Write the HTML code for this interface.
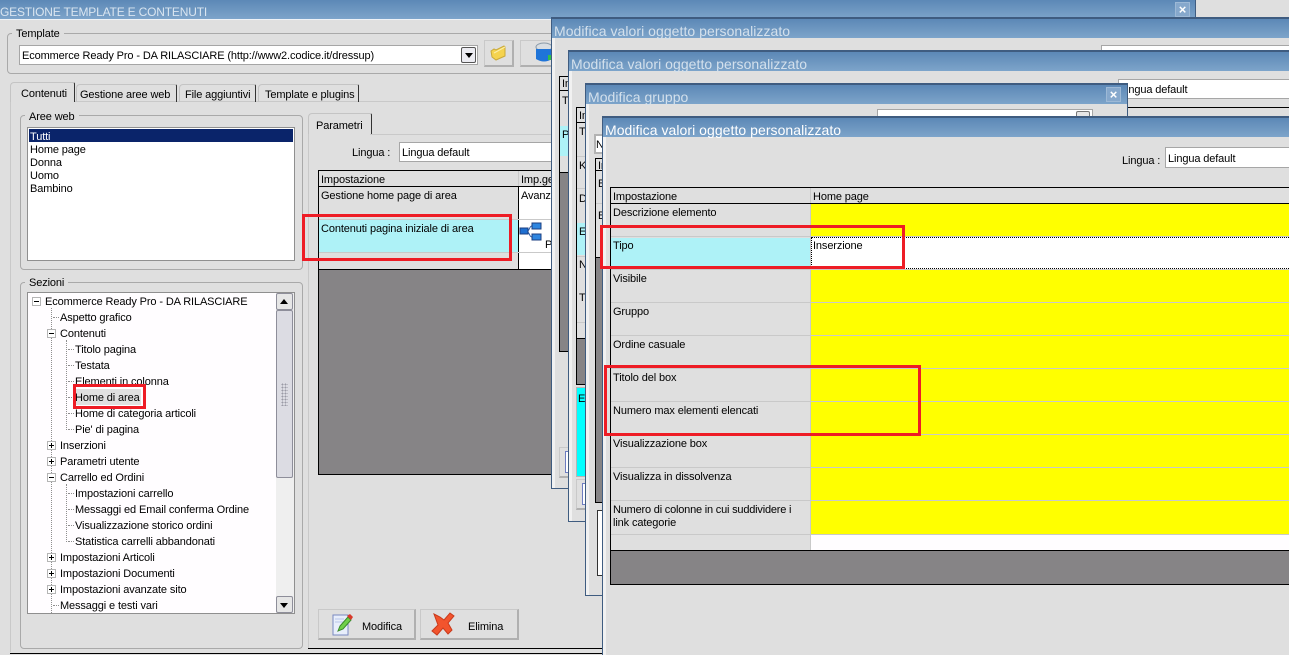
<!DOCTYPE html>
<html><head><meta charset="utf-8"><title>Gestione template e contenuti</title>
<style>
html,body{margin:0;padding:0;width:1289px;height:655px;overflow:hidden}
body{position:relative;background:#dfdfdf;font:11px/14px "Liberation Sans",sans-serif;color:#000}
div,svg{position:absolute;box-sizing:border-box}
.t{white-space:nowrap;height:14px;margin-top:1px;letter-spacing:-.12px}
.tb{background:linear-gradient(#5c88b6,#7da4ca)}
.win{border:1px solid #3f5c80;background:#dfdfdf;border-top:2px solid #3f5c80}
.edge{background:#f1f1f1}
.wt{white-space:nowrap;color:#d3e0ec;font-size:14px;line-height:16px;height:16px;letter-spacing:.05px;margin-top:1px}
.fs{border:1px solid #a9a9a9;border-radius:4px}
.lg{background:#dfdfdf;padding:0 4px;white-space:nowrap;height:14px;margin-top:1px;letter-spacing:-.12px}
.in{background:#fff;border:1px solid #a6a6a6}
.box{background:#fff;border:1px solid #8f8f8f}
.red{border:3px solid #ee1c25}
.k{background:#000}
.g{background:#868486}
.s{background:#c9c9c9}
.btn{background:#dfdfdf;border:1px solid #c9c9c9;border-right:2px solid #b0b0b0;border-bottom:2px solid #b0b0b0}
.xb{width:15px;height:15px;background:#86a8cc;border:1px solid #9db9d6;color:#fff;font:bold 13px/13px "Liberation Sans",sans-serif;text-align:center}
.v{border-left:1px dotted #8f8f8f;width:1px}
.h{border-top:1px dotted #8f8f8f;height:1px}
.ex{width:9px;height:9px;border:1px solid #b5b5b5;background:#fff}
.ex:before{content:"";position:absolute;left:1px;top:3px;width:5px;height:1px;background:#000}
.p:after{content:"";position:absolute;left:3px;top:1px;width:1px;height:5px;background:#000}
.sb{background:#e6e6e6;border:1px solid #8e8e9a;border-radius:2px}
.ar{width:0;height:0;border-left:4px solid transparent;border-right:4px solid transparent}
.up{border-bottom:5px solid #000}
.dn{border-top:5px solid #000}
.tab{border-right:1px solid #333;border-top:1px solid #c4c4c4;border-left:1px solid #c4c4c4;border-radius:4px 2px 0 0}
</style></head><body>

<!-- main window -->
<div class="tb" style="left:0;top:0;width:1196px;height:19px;border-right:1px solid #3f5c80"></div>
<div class="s" style="left:0;top:19px;width:1196px;height:1px;background:#eef2f6"></div>
<div class="t" style="left:0;top:4px;color:#d9e5f0;font-size:12px;letter-spacing:-.18px;">GESTIONE TEMPLATE E CONTENUTI</div>
<div class="xb" style="left:1175px;top:2px">×</div>

<div class="fs" style="left:7px;top:33px;width:700px;height:41px"></div>
<div class="lg" style="left:12px;top:26px">Template</div>
<div class="in" style="left:19px;top:45px;width:459px;height:20px"></div>
<div class="t" style="left:22px;top:48px">Ecommerce Ready Pro - DA RILASCIARE (http://www2.codice.it/dressup)</div>
<div class="sb" style="left:461px;top:47px;width:15px;height:16px;border-color:#555;background:#ececf2"></div>
<div class="ar dn" style="left:465px;top:53px"></div>
<div class="btn" style="left:484px;top:40px;width:30px;height:27px"></div>
<svg style="left:490px;top:44px" width="18" height="18" viewBox="0 0 18 18"><path d="M1 7l3-2 2 1 8-4 1 1v9l-9 4-4-3z" fill="#f5d34e" stroke="#c9a93a"/><path d="M4 9l11-6" stroke="#fbeeaa"/></svg>
<div class="btn" style="left:520px;top:40px;width:40px;height:27px"></div>
<svg style="left:534px;top:41px" width="20" height="24" viewBox="0 0 20 24"><ellipse cx="10" cy="6" rx="8" ry="4" fill="#d8dde2" stroke="#8a9aa8"/><path d="M2 8h16v10q-8 5-16 0z" fill="#1f74d8"/><rect x="14" y="14" width="5" height="5" fill="#2fc04a"/></svg>

<!-- tabs -->
<div class="s" style="left:74px;top:101px;width:480px;height:1px"></div>
<div class="tab" style="left:10px;top:82px;width:65px;height:20px"></div>
<div class="t" style="left:21px;top:86px">Contenuti</div>
<div class="tab" style="left:76px;top:84px;width:101px;height:18px"></div>
<div class="t" style="left:80px;top:87px">Gestione aree web</div>
<div class="tab" style="left:179px;top:84px;width:77px;height:18px"></div>
<div class="t" style="left:185px;top:87px">File aggiuntivi</div>
<div class="tab" style="left:258px;top:84px;width:101px;height:18px"></div>
<div class="t" style="left:265px;top:87px">Template e plugins</div>
<div class="s" style="left:10px;top:102px;width:1px;height:550px"></div>
<div class="k" style="left:10px;top:653px;width:595px;height:1px"></div>

<!-- aree web -->
<div class="fs" style="left:20px;top:115px;width:283px;height:155px"></div>
<div class="lg" style="left:25px;top:109px">Aree web</div>
<div class="box" style="left:27px;top:127px;width:268px;height:134px"></div>
<div style="left:29px;top:129px;width:264px;height:13px;background:#0a246a"></div>
<div class="t" style="left:30px;top:129px;color:#fff">Tutti</div>
<div class="t" style="left:30px;top:142px">Home page</div>
<div class="t" style="left:30px;top:155px">Donna</div>
<div class="t" style="left:30px;top:168px">Uomo</div>
<div class="t" style="left:30px;top:181px">Bambino</div>

<!-- sezioni -->
<div class="fs" style="left:20px;top:282px;width:283px;height:367px"></div>
<div class="lg" style="left:25px;top:275px">Sezioni</div>
<div class="box" style="left:27px;top:292px;width:268px;height:322px;background:#fffdff"></div>
<div class="v" style="left:51px;top:308px;height:305px"></div>
<div class="v" style="left:66px;top:340px;height:90px"></div>
<div class="v" style="left:66px;top:484px;height:58px"></div>
<div class="h" style="left:53px;top:317px;width:6px"></div>
<div class="h" style="left:68px;top:349px;width:6px"></div>
<div class="h" style="left:68px;top:365px;width:6px"></div>
<div class="h" style="left:68px;top:381px;width:6px"></div>
<div class="h" style="left:68px;top:397px;width:6px"></div>
<div class="h" style="left:68px;top:413px;width:6px"></div>
<div class="h" style="left:68px;top:429px;width:6px"></div>
<div class="h" style="left:68px;top:493px;width:6px"></div>
<div class="h" style="left:68px;top:509px;width:6px"></div>
<div class="h" style="left:68px;top:525px;width:6px"></div>
<div class="h" style="left:68px;top:541px;width:6px"></div>
<div class="h" style="left:53px;top:605px;width:6px"></div>
<div class="ex" style="left:32px;top:297px"></div>
<div class="ex" style="left:47px;top:329px"></div>
<div class="ex p" style="left:47px;top:441px"></div>
<div class="ex p" style="left:47px;top:457px"></div>
<div class="ex" style="left:47px;top:473px"></div>
<div class="ex p" style="left:47px;top:553px"></div>
<div class="ex p" style="left:47px;top:569px"></div>
<div class="ex p" style="left:47px;top:585px"></div>
<div class="t" style="left:45px;top:294px">Ecommerce Ready Pro - DA RILASCIARE</div>
<div class="t" style="left:60px;top:310px">Aspetto grafico</div>
<div class="t" style="left:60px;top:326px">Contenuti</div>
<div class="t" style="left:75px;top:342px">Titolo pagina</div>
<div class="t" style="left:75px;top:358px">Testata</div>
<div class="t" style="left:75px;top:374px">Elementi in colonna</div>
<div style="left:75px;top:389px;width:66px;height:16px;background:#e0e0e0"></div>
<div class="t" style="left:75px;top:390px">Home di area</div>
<div class="t" style="left:75px;top:406px">Home di categoria articoli</div>
<div class="t" style="left:75px;top:422px">Pie' di pagina</div>
<div class="t" style="left:60px;top:438px">Inserzioni</div>
<div class="t" style="left:60px;top:454px">Parametri utente</div>
<div class="t" style="left:60px;top:470px">Carrello ed Ordini</div>
<div class="t" style="left:75px;top:486px">Impostazioni carrello</div>
<div class="t" style="left:75px;top:502px">Messaggi ed Email conferma Ordine</div>
<div class="t" style="left:75px;top:518px">Visualizzazione storico ordini</div>
<div class="t" style="left:75px;top:534px">Statistica carrelli abbandonati</div>
<div class="t" style="left:60px;top:550px">Impostazioni Articoli</div>
<div class="t" style="left:60px;top:566px">Impostazioni Documenti</div>
<div class="t" style="left:60px;top:582px">Impostazioni avanzate sito</div>
<div class="t" style="left:60px;top:598px">Messaggi e testi vari</div>
<div style="left:276px;top:293px;width:18px;height:320px;background:#efefef"></div>
<div class="sb" style="left:276px;top:293px;width:17px;height:17px"></div>
<div class="ar up" style="left:280px;top:299px"></div>
<div class="sb" style="left:276px;top:310px;width:17px;height:168px;background:#dcdce3"></div>
<div style="left:281px;top:383px;width:7px;height:23px;background-image:radial-gradient(#9a9aa6 0.8px,transparent 1px);background-size:3px 3px"></div>
<div class="sb" style="left:276px;top:596px;width:17px;height:17px"></div>
<div class="ar dn" style="left:280px;top:603px"></div>
<div class="red" style="left:73px;top:384px;width:73px;height:25px"></div>

<!-- parametri -->
<div class="s" style="left:308px;top:134px;width:1px;height:514px"></div>
<div class="s" style="left:370px;top:134px;width:190px;height:1px"></div>
<div class="tab" style="left:308px;top:113px;width:64px;height:21px"></div>
<div class="t" style="left:316px;top:118px">Parametri</div>
<div class="t" style="left:352px;top:145px">Lingua :</div>
<div class="in" style="left:399px;top:142px;width:160px;height:20px"></div>
<div class="t" style="left:402px;top:145px">Lingua default</div>
<div class="k" style="left:318px;top:170px;width:240px;height:305px"></div>
<div style="left:319px;top:171px;width:240px;height:15px;background:#dfdfdf"></div>
<div class="s" style="left:518px;top:171px;width:1px;height:15px"></div>
<div class="t" style="left:321px;top:172px">Impostazione</div>
<div class="t" style="left:521px;top:172px">Imp.generali</div>
<div style="left:319px;top:187px;width:199px;height:82px;background:#dfdfdf"></div>
<div style="left:519px;top:187px;width:40px;height:82px;background:#fff"></div>
<div class="t" style="left:321px;top:188px">Gestione home page di area</div>
<div class="t" style="left:521px;top:188px">Avanzate</div>
<div style="left:319px;top:220px;width:199px;height:32px;background:#aef2f7"></div>
<div class="s" style="left:319px;top:219px;width:240px;height:1px"></div>
<div class="s" style="left:319px;top:252px;width:240px;height:1px"></div>
<div class="t" style="left:321px;top:221px">Contenuti pagina iniziale di area</div>
<svg style="left:519px;top:222px" width="25" height="22" viewBox="0 0 25 22"><path d="M8 9C11 9 10 4 13 4M8 10C11 10 10 15 13 15" fill="none" stroke="#2a5aa8"/><rect x="1" y="6" width="8" height="6" fill="#1f6fd0" stroke="#1c3f80"/><rect x="13" y="1" width="9" height="6" fill="#2e86e0" stroke="#1c3f80"/><rect x="13" y="12" width="9" height="6" fill="#2e86e0" stroke="#1c3f80"/></svg>
<div class="t" style="left:545px;top:237px">P</div>
<div class="g" style="left:319px;top:270px;width:240px;height:204px"></div>

<div class="btn" style="left:318px;top:609px;width:98px;height:31px"></div>
<svg style="left:331px;top:613px" width="24" height="24" viewBox="0 0 24 24"><path d="M2 2h15v20H2z" fill="#e8eefb" stroke="#7a8ac0"/><path d="M4 6h9M4 9h9" stroke="#b9c6e8"/><path d="M7 18l2-5 8-9 3 3-8 9z" fill="#6fd04a" stroke="#3a8a2a"/><path d="M16 3l3-2 3 3-2 3z" fill="#d8392a"/></svg>
<div class="t" style="left:362px;top:619px">Modifica</div>
<div class="btn" style="left:420px;top:609px;width:99px;height:31px"></div>
<svg style="left:431px;top:612px" width="24" height="24" viewBox="0 0 24 24"><path d="M3 2l6 3 4 3 6-7 4 3-6 7 4 7-4 4-5-6-6 7-5-4 6-6z" fill="#f2542d" stroke="#c93a1c"/></svg>
<div class="t" style="left:468px;top:619px">Elimina</div>
<div class="k" style="left:308px;top:648px;width:297px;height:1px"></div>

<!-- window 1 -->
<div class="win" style="left:551px;top:17px;width:738px;height:472px;border-right:0"></div>
<div class="edge" style="left:552px;top:38px;width:3px;height:450px"></div>
<div class="tb" style="left:552px;top:19px;width:737px;height:19px"></div>
<div class="wt" style="left:554px;top:22px">Modifica valori oggetto personalizzato</div>
<div class="in" style="left:1101px;top:45px;width:200px;height:20px"></div>
<div class="k" style="left:559px;top:76px;width:12px;height:276px"></div>
<div style="left:560px;top:77px;width:12px;height:13px;background:#dfdfdf"></div>
<div style="left:560px;top:91px;width:12px;height:35px;background:#dfdfdf"></div>
<div style="left:560px;top:126px;width:12px;height:30px;background:#aef2f7"></div>
<div style="left:560px;top:156px;width:12px;height:16px;background:#dfdfdf"></div>
<div class="g" style="left:560px;top:173px;width:12px;height:178px"></div>
<div class="t" style="left:562px;top:76px">Im</div>
<div class="t" style="left:562px;top:93px">Ti</div>
<div class="t" style="left:562px;top:127px">Pa</div>
<div class="btn" style="left:559px;top:447px;width:20px;height:31px"></div>
<div style="left:565px;top:451px;width:8px;height:22px;background:#fff;border:1px solid #6d7cc0"></div>

<!-- window 2 -->
<div class="win" style="left:568px;top:50px;width:721px;height:472px;border-right:0"></div>
<div class="edge" style="left:569px;top:71px;width:3px;height:450px"></div>
<div class="tb" style="left:569px;top:52px;width:720px;height:19px"></div>
<div class="wt" style="left:571px;top:55px">Modifica valori oggetto personalizzato</div>
<div class="in" style="left:1118px;top:79px;width:200px;height:20px"></div>
<div class="t" style="left:1120px;top:82px">Lingua default</div>
<div class="k" style="left:576px;top:107px;width:713px;height:1px"></div>
<div class="k" style="left:576px;top:107px;width:12px;height:278px"></div>
<div style="left:577px;top:108px;width:12px;height:14px;background:#dfdfdf"></div>
<div style="left:577px;top:123px;width:12px;height:215px;background:#dfdfdf"></div>
<div class="s" style="left:577px;top:156px;width:12px;height:1px"></div>
<div class="s" style="left:577px;top:188px;width:12px;height:1px"></div>
<div style="left:577px;top:223px;width:12px;height:32px;background:#aef2f7"></div>
<div class="s" style="left:577px;top:256px;width:12px;height:1px"></div>
<div class="s" style="left:577px;top:322px;width:12px;height:1px"></div>
<div class="g" style="left:577px;top:339px;width:12px;height:45px"></div>
<div class="t" style="left:579px;top:108px">Im</div>
<div class="t" style="left:579px;top:124px">Ti</div>
<div class="t" style="left:579px;top:158px">Ke</div>
<div class="t" style="left:579px;top:191px">De</div>
<div class="t" style="left:579px;top:224px">En</div>
<div class="t" style="left:579px;top:257px">No</div>
<div class="t" style="left:579px;top:290px">Ti</div>
<div style="left:576px;top:387px;width:15px;height:90px;background:#0ff;border:1px solid #b5b5b5;border-right:0"></div>
<div class="t" style="left:578px;top:391px">En</div>
<div class="btn" style="left:576px;top:479px;width:20px;height:31px"></div>
<div style="left:582px;top:483px;width:8px;height:22px;background:#fff;border:1px solid #6d7cc0"></div>

<!-- window 3 -->
<div class="win" style="left:585px;top:83px;width:543px;height:513px"></div>
<div class="edge" style="left:586px;top:104px;width:3px;height:491px"></div>
<div class="tb" style="left:586px;top:85px;width:541px;height:19px"></div>
<div class="wt" style="left:588px;top:88px">Modifica gruppo</div>
<div class="xb" style="left:1106px;top:87px">×</div>
<div class="in" style="left:877px;top:109px;width:216px;height:20px"></div>
<div class="sb" style="left:1076px;top:111px;width:14px;height:16px;border-color:#777"></div>
<div style="left:594px;top:134px;width:16px;height:20px;background:#fff;border:2px solid #b3b3b3"></div>
<div class="t" style="left:596px;top:137px">No</div>
<div class="k" style="left:595px;top:158px;width:12px;height:345px"></div>
<div style="left:596px;top:159px;width:12px;height:11px;background:#dfdfdf"></div>
<div style="left:596px;top:171px;width:12px;height:86px;background:#dfdfdf"></div>
<div class="s" style="left:596px;top:203px;width:12px;height:1px"></div>
<div class="g" style="left:596px;top:258px;width:12px;height:244px"></div>
<div class="t" style="left:598px;top:158px">Im</div>
<div class="t" style="left:598px;top:176px">Be</div>
<div class="t" style="left:598px;top:208px">Be</div>
<div style="left:597px;top:510px;width:12px;height:66px;background:#fff;border:1px solid #333"></div>

<!-- window 4 -->
<div class="win" style="left:602px;top:116px;width:687px;height:539px;border-right:0;border-bottom:0"></div>
<div class="edge" style="left:603px;top:137px;width:3px;height:518px"></div>
<div class="tb" style="left:603px;top:118px;width:686px;height:19px"></div>
<div class="wt" style="left:605px;top:121px;color:#fff">Modifica valori oggetto personalizzato</div>
<div class="t" style="left:1122px;top:153px">Lingua :</div>
<div class="in" style="left:1165px;top:147px;width:200px;height:21px"></div>
<div class="t" style="left:1168px;top:151px">Lingua default</div>

<div class="k" style="left:610px;top:187px;width:679px;height:398px"></div>
<div style="left:611px;top:188px;width:678px;height:15px;background:#dfdfdf"></div>
<div class="s" style="left:810px;top:188px;width:1px;height:15px"></div>
<div class="t" style="left:613px;top:189px">Impostazione</div>
<div class="t" style="left:813px;top:189px">Home page</div>
<div style="left:611px;top:204px;width:199px;height:346px;background:#dfdfdf"></div>
<div style="left:811px;top:204px;width:478px;height:330px;background:#ff0"></div>
<div style="left:810px;top:204px;width:1px;height:346px;background:#c9c9c9"></div>
<div style="left:611px;top:534px;width:678px;height:1px;background:#c9c9c9"></div>
<div style="left:811px;top:535px;width:478px;height:15px;background:#fffdff"></div>
<div style="left:611px;top:550px;width:678px;height:1px;background:#000"></div>
<div class="g" style="left:611px;top:551px;width:678px;height:33px"></div>

<div class="s" style="left:611px;top:236px;width:678px;height:1px"></div>
<div class="s" style="left:611px;top:269px;width:678px;height:1px"></div>
<div class="s" style="left:611px;top:302px;width:678px;height:1px"></div>
<div class="s" style="left:611px;top:335px;width:678px;height:1px"></div>
<div class="s" style="left:611px;top:368px;width:678px;height:1px"></div>
<div class="s" style="left:611px;top:401px;width:678px;height:1px"></div>
<div class="s" style="left:611px;top:434px;width:678px;height:1px"></div>
<div class="s" style="left:611px;top:467px;width:678px;height:1px"></div>
<div class="s" style="left:611px;top:500px;width:678px;height:1px"></div>

<div style="left:611px;top:238px;width:199px;height:30px;background:#aef2f7"></div>
<div style="left:811px;top:237px;width:478px;height:32px;background:#fff;border:1px dotted #000;border-right:0"></div>

<div class="t" style="left:613px;top:205px">Descrizione elemento</div>
<div class="t" style="left:613px;top:238px">Tipo</div>
<div class="t" style="left:813px;top:238px">Inserzione</div>
<div class="t" style="left:613px;top:271px">Visibile</div>
<div class="t" style="left:613px;top:304px">Gruppo</div>
<div class="t" style="left:613px;top:337px">Ordine casuale</div>
<div class="t" style="left:613px;top:370px">Titolo del box</div>
<div class="t" style="left:613px;top:403px">Numero max elementi elencati</div>
<div class="t" style="left:613px;top:436px">Visualizzazione box</div>
<div class="t" style="left:613px;top:469px">Visualizza in dissolvenza</div>
<div class="t" style="left:613px;top:502px;letter-spacing:-.2px">Numero di colonne in cui suddividere i</div>
<div class="t" style="left:613px;top:515px">link categorie</div>

<!-- red highlight boxes -->
<div class="red" style="left:302px;top:214px;width:210px;height:47px"></div>
<div class="red" style="left:600px;top:225px;width:305px;height:44px"></div>
<div class="red" style="left:604px;top:365px;width:317px;height:71px"></div>
</body></html>
